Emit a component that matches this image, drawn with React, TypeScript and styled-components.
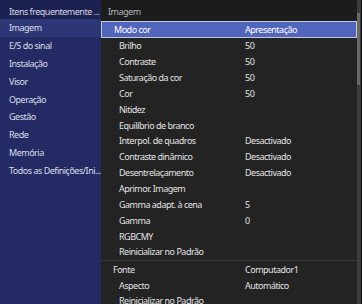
import React from "react";
import styled, { createGlobalStyle } from "styled-components";

const Global = createGlobalStyle`
  html, body { margin: 0; padding: 0; background: #111; }
  * { box-sizing: border-box; }
`;

const Screen = styled.div`
  width: 362px;
  height: 304px;
  display: flex;
  overflow: hidden;
  font-family: "Noto Sans", "Open Sans", sans-serif;
  font-size: 9px;
  letter-spacing: -0.5px;
  background: #111;
`;

const Nav = styled.div`
  width: 101px;
  flex: none;
  background: #232a64;
  display: flex;
  flex-direction: column;
`;

const NavTop = styled.div`
  height: 19px;
  flex: none;
  padding: 3px 0 0 9px;
  display: flex;
  align-items: center;
  background: #1d2152;
  color: #d6d8e4;
  white-space: nowrap;
`;

const NavItem = styled.div<{ $active?: boolean }>`
  height: 17.8px;
  flex: none;
  padding-left: 9px;
  display: flex;
  align-items: center;
  color: #dcdee8;
  white-space: nowrap;
  background: ${(p) => (p.$active ? "#2e3776" : "transparent")};
`;

const Panel = styled.div`
  flex: 1;
  display: flex;
  background: #232323;
  overflow: hidden;
`;

const Content = styled.div`
  flex: 1;
  display: flex;
  flex-direction: column;
  overflow: hidden;
`;

const Header = styled.div`
  height: 21px;
  flex: none;
  padding: 2px 0 0 7px;
  display: flex;
  align-items: center;
  background: #1c1c1c;
  color: #b4b4b8;
`;

const Row = styled.div<{ $selected?: boolean; $top?: boolean }>`
  height: ${(p) => (p.$selected ? "17px" : "15.85px")};
  flex: none;
  display: flex;
  align-items: center;
  padding-left: ${(p) => (p.$top ? "12px" : "18px")};
  color: ${(p) => (p.$selected ? "#ffffff" : "#e2e2e4")};
  background: ${(p) => (p.$selected ? "#5265bd" : "transparent")};
  border: ${(p) => (p.$selected ? "1px solid #c5c8d6" : "none")};
  white-space: nowrap;
`;

const Label = styled.span<{ $top?: boolean; $selected?: boolean }>`
  width: ${(p) => (p.$selected ? "131px" : p.$top ? "132px" : "126px")};
  flex: none;
`;

const Value = styled.span``;

const Separator = styled.div`
  height: 1px;
  flex: none;
  background: #383838;
  margin-top: 0.5px;
`;

const Track = styled.div`
  width: 5px;
  flex: none;
  background: #3c3c3c;
  border-right: 1px solid #0c0c0c;
  padding-top: 13px;
`;

const Thumb = styled.div`
  height: 72px;
  background: #686868;
  margin-right: 1px;
`;

type Item = { label: string; value?: string; top?: boolean; selected?: boolean };

const section1: Item[] = [
  { label: "Modo cor", value: "Apresentação", top: true, selected: true },
  { label: "Brilho", value: "50" },
  { label: "Contraste", value: "50" },
  { label: "Saturação da cor", value: "50" },
  { label: "Cor", value: "50" },
  { label: "Nitidez" },
  { label: "Equilíbrio de branco" },
  { label: "Interpol. de quadros", value: "Desactivado" },
  { label: "Contraste dinâmico", value: "Desactivado" },
  { label: "Desentrelaçamento", value: "Desactivado" },
  { label: "Aprimor. Imagem" },
  { label: "Gamma adapt. à cena", value: "5" },
  { label: "Gamma", value: "0" },
  { label: "RGBCMY" },
  { label: "Reinicializar no Padrão" },
];

const section2: Item[] = [
  { label: "Fonte", value: "Computador1", top: true },
  { label: "Aspecto", value: "Automático" },
  { label: "Reinicializar no Padrão" },
];

const navItems = [
  "Imagem",
  "E/S do sinal",
  "Instalação",
  "Visor",
  "Operação",
  "Gestão",
  "Rede",
  "Memória",
  "Todos as Definições/Ini...",
];

const renderRow = (it: Item) => (
  <Row key={it.label + (it.value ?? "")} $selected={it.selected} $top={it.top}>
    <Label $top={it.top} $selected={it.selected}>
      {it.label}
    </Label>
    {it.value && <Value>{it.value}</Value>}
  </Row>
);

export default function App() {
  return (
    <>
      <Global />
      <Screen>
        <Nav>
          <NavTop>Itens frequentemente ...</NavTop>
          {navItems.map((n, i) => (
            <NavItem key={n} $active={i === 0}>
              {n}
            </NavItem>
          ))}
        </Nav>
        <Panel>
          <Content>
            <Header>Imagem</Header>
            {section1.map(renderRow)}
            <Separator />
            {section2.map(renderRow)}
          </Content>
          <Track>
            <Thumb />
          </Track>
        </Panel>
      </Screen>
    </>
  );
}
